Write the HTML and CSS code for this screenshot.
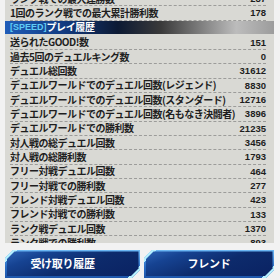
FILE: index.html
```html
<!DOCTYPE html>
<html lang="ja">
<head>
<meta charset="utf-8">
<link rel="stylesheet" href="styles.css">
</head>
<body>
<div class="screen">
  <div class="panel">
    <div class="row"><span class="label">ランク戦での最大連勝数</span><span class="val">287</span></div>
    <div class="row"><span class="label">1回のランク戦での最大累計勝利数</span><span class="val">178</span></div>
    <div class="head"><span class="tag">[SPEED]</span>プレイ履歴</div>
    <div class="row"><span class="label">送られたGOOD!数</span><span class="val">151</span></div>
    <div class="row"><span class="label">過去5回のデュエルキング数</span><span class="val">0</span></div>
    <div class="row"><span class="label">デュエル総回数</span><span class="val">31612</span></div>
    <div class="row"><span class="label">デュエルワールドでのデュエル回数(レジェンド)</span><span class="val">8830</span></div>
    <div class="row"><span class="label">デュエルワールドでのデュエル回数(スタンダード)</span><span class="val">12716</span></div>
    <div class="row"><span class="label">デュエルワールドでのデュエル回数(名もなき決闘者)</span><span class="val">3896</span></div>
    <div class="row"><span class="label">デュエルワールドでの勝利数</span><span class="val">21235</span></div>
    <div class="row"><span class="label">対人戦の総デュエル回数</span><span class="val">3456</span></div>
    <div class="row"><span class="label">対人戦の総勝利数</span><span class="val">1793</span></div>
    <div class="row"><span class="label">フリー対戦デュエル回数</span><span class="val">464</span></div>
    <div class="row"><span class="label">フリー対戦での勝利数</span><span class="val">277</span></div>
    <div class="row"><span class="label">フレンド対戦デュエル回数</span><span class="val">423</span></div>
    <div class="row"><span class="label">フレンド対戦での勝利数</span><span class="val">133</span></div>
    <div class="row"><span class="label">ランク戦デュエル回数</span><span class="val">1370</span></div>
    <div class="row"><span class="label">ランク戦での勝利数</span><span class="val">893</span></div>
  </div>
  <div class="buttons">
    <div class="btn btn-left"><div class="btn-in">受け取り履歴</div></div>
    <div class="btn btn-right"><div class="btn-in">フレンド</div></div>
  </div>
</div>
</body>
</html>
```

FILE: styles.css
```css
html, body {
  margin: 0;
  padding: 0;
  background: #f2f2f2;
}
.screen {
  width: 280px;
  height: 280px;
  overflow: hidden;
  display: flex;
  flex-direction: column;
  font-family: "Noto Sans CJK JP", "Noto Sans", sans-serif;
}
.panel {
  flex: none;
  margin: -8px 6px 0 5px;
  height: 251.3px;
  overflow: hidden;
  background: #d9d9d4;
}
.row {
  display: flex;
  justify-content: space-between;
  align-items: center;
  height: 13.33px;
  margin: 0 8px 0 5px;
  border-bottom: 1px dashed #9c9c9a;
}
.label {
  font-size: 10px;
  font-weight: 700;
  letter-spacing: -0.5px;
  line-height: 1;
  color: #1e1e1e;
  white-space: nowrap;
}
.val {
  font-family: "Liberation Sans", Arial, sans-serif;
  font-weight: 700;
  font-size: 9.5px;
  line-height: 1;
  color: #1e1e1e;
}
.head {
  height: 13px;
  margin: 0 0 2px;
  padding-left: 5px;
  display: flex;
  align-items: center;
  background: linear-gradient(to right, #1f5cb8 0%, #123a80 22%, #0c1a33 42%, #3a3a3a 58%, #bcbcbc 86%, #9c9c9c 100%);
  color: #ffffff;
  font-size: 10px;
  font-weight: 700;
  letter-spacing: -0.4px;
  line-height: 1;
}
.tag {
  font-family: "Liberation Sans", Arial, sans-serif;
  font-size: 9px;
  letter-spacing: 0;
  color: #5fcdf5;
}
.buttons {
  flex: none;
  display: flex;
  gap: 4px;
  height: 28px;
  margin: 6.7px 0 0 5px;
}
.btn {
  box-sizing: border-box;
  padding: 1.5px;
  height: 28px;
  background:
    linear-gradient(135deg, #b4f0ff 0, #b4f0ff 9px, transparent 9px) top left / 14px 14px no-repeat,
    linear-gradient(-45deg, #b4f0ff 0, #b4f0ff 9px, transparent 9px) bottom right / 14px 14px no-repeat,
    linear-gradient(to bottom, #6cb8f4, #2a6cc4 60%, #1d55aa);
  clip-path: polygon(8px 0, 100% 0, 100% calc(100% - 8px), calc(100% - 8px) 100%, 0 100%, 0 8px);
}
.btn-left { width: 135px; }
.btn-right { width: 130px; }
.btn-in {
  height: 100%;
  display: flex;
  align-items: center;
  justify-content: center;
  background: linear-gradient(160deg, #2d63b6 0%, #164392 22%, #0d2b6c 55%, #0a2262 100%);
  clip-path: polygon(8px 0, 100% 0, 100% calc(100% - 8px), calc(100% - 8px) 100%, 0 100%, 0 8px);
  color: #ffffff;
  font-size: 11px;
  font-weight: 700;
  letter-spacing: -0.3px;
  line-height: 1;
}
.btn-left .btn-in {
  padding-right: 20px;
}
```
